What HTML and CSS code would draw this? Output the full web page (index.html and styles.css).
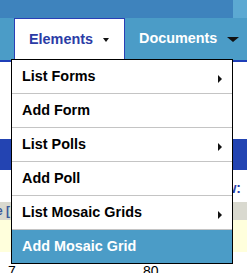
FILE: index.html
```html
<!DOCTYPE html>
<html lang="en">
<head>
    <meta charset="UTF-8">
    <meta name="viewport" content="width=device-width, initial-scale=1.0">
    <title>Elements menu</title>
    <link rel="stylesheet" href="styles.css">
</head>
<body>
    <!-- Barra superior -->
    <div class="topbar">
        <div class="topbar-end"></div>
    </div>

    <!-- Menu principal -->
    <nav class="menu">
        <div class="tab tab-active">Elements <span class="caret"></span></div>
        <div class="tab">Documents <span class="caret caret-big"></span></div>
    </nav>

    <!-- Conteudo da pagina (atras do menu) -->
    <div class="page">
        <div class="spacer"></div>
        <div class="band"></div>
        <div class="toolbar"><span class="view">View:</span></div>
        <div class="thead"><span class="check">e [</span></div>
        <div class="row row-yellow"></div>
        <div class="row row-data">
            <span>7</span>
            <span>80</span>
        </div>
    </div>

    <!-- Dropdown aberto -->
    <ul class="dropdown">
        <li class="item has-sub">List Forms</li>
        <li class="item">Add Form</li>
        <li class="item has-sub">List Polls</li>
        <li class="item">Add Poll</li>
        <li class="item has-sub">List Mosaic Grids</li>
        <li class="item item-active">Add Mosaic Grid</li>
    </ul>
</body>
</html>
```

FILE: styles.css
```css
/* Menu de elementos */
body {
    margin: 0;
    font-family: "Liberation Sans", Arial, sans-serif;
    font-weight: bold;
    font-size: 14px;
    background-color: #fff;
    position: relative;
    overflow: hidden;
}
.topbar {
    height: 18px;
    background-color: #3e83bd;
    display: flex;
    justify-content: flex-end;
}
.topbar-end {
    width: 14px;
    background-color: #5ca9d2;
}
.menu {
    display: flex;
    height: 42px;
    padding-left: 14px;
    background-color: #4b9cc7;
    border-bottom: 2px solid #1f3fb8;
    font-size: 14.4px;
}
.tab {
    padding: 0 14px;
    line-height: 41px;
    color: #fff;
    white-space: nowrap;
}
.tab-active {
    padding-right: 15px;
    background-color: #fff;
    color: #2b3ca6;
    border: 1px solid #2a3fb5;
    border-bottom: none;
}
.caret {
    display: inline-block;
    margin-left: 6px;
    border-left: 3px solid transparent;
    border-right: 3px solid transparent;
    border-top: 4px solid #111;
    vertical-align: 2px;
}
.caret-big {
    margin-left: 6px;
    border-left: 6px solid transparent;
    border-right: 6px solid transparent;
    border-top: 5px solid #111;
    vertical-align: 1px;
}
.spacer {
    height: 77px;
}
.band {
    height: 31px;
    background-color: #2344b2;
}
.toolbar {
    height: 32px;
    display: flex;
    justify-content: flex-end;
    align-items: center;
    padding-right: 6px;
}
.view {
    color: #2b3ca6;
    padding-top: 4px;
}
.thead {
    height: 18px;
    background-color: #d9d9cf;
    display: flex;
    align-items: center;
}
.check {
    font-size: 12px;
    color: #3a5a9a;
    margin-left: -4px;
}
.row-yellow {
    height: 32px;
    background-color: #ffffdc;
}
.row-data {
    display: grid;
    grid-template-columns: 135px 1fr;
    padding: 11px 0 0 8px;
    font-weight: normal;
    line-height: 16px;
    color: #000;
}

/* Dropdown */
.dropdown {
    position: absolute;
    left: 11px;
    top: 59px;
    width: 220px;
    margin: 0;
    padding: 0;
    list-style: none;
    background-color: #fff;
    border: 1px solid #000;
    font-size: 14.4px;
}
.item {
    height: 33px;
    line-height: 33px;
    padding-left: 10px;
    color: #000;
    border-bottom: 1px solid #c4c4c4;
    display: flex;
    justify-content: space-between;
    align-items: center;
}
.item:last-child {
    border-bottom: none;
}
.has-sub::after {
    content: "";
    margin-right: 10px;
    margin-top: 5px;
    border-left: 4px solid #111;
    border-top: 4px solid transparent;
    border-bottom: 4px solid transparent;
}
.item-active {
    background-color: #4b9cc7;
    color: #fff;
}
```
